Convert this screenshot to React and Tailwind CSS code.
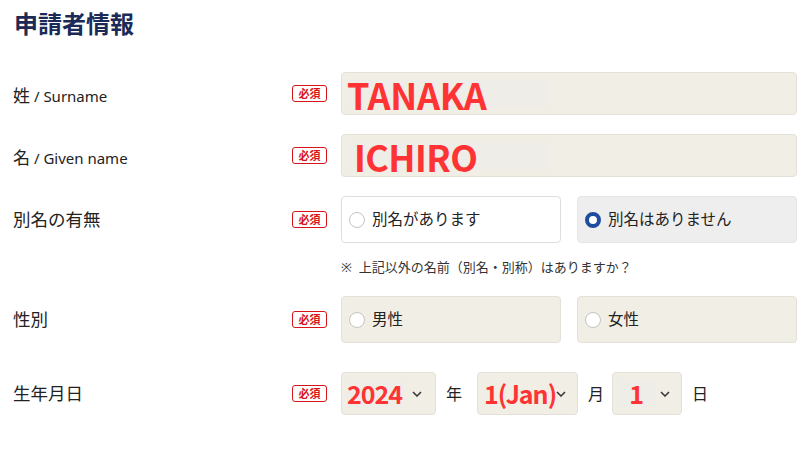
import React from "react";

const Badge = () => (
    <div className="w-[35px] h-[17px] shrink-0 border border-[#d8141b] rounded-[3px] flex items-center justify-center text-[11px] font-bold text-[#d8141b] leading-none">
        必須
    </div>
);

const Chevron = () => (
    <svg width="10" height="6" viewBox="0 0 10 6" className="shrink-0">
        <path d="M1 1 L5 5 L9 1" fill="none" stroke="#333" strokeWidth="1.5"/>
    </svg>
);

const Radio = ({checked}) => (
    checked ? (
        <span className="w-[16px] h-[16px] rounded-full border-[4px] border-[#1d4e9e] bg-white shrink-0"></span>
    ) : (
        <span className="w-[16px] h-[16px] rounded-full border border-[#c4c4c4] bg-white shrink-0"></span>
    )
);

const Row = ({label, children, className}) => (
    <div className={"flex items-center " + (className || "")}>
        <div className="w-[292px] pl-[13px] shrink-0">{label}</div>
        <Badge/>
        <div className="ml-[14px] w-[456px]">{children}</div>
    </div>
);

const App = () => {
    return (
        <div className="w-[809px] h-[451px] bg-white text-[#222] font-['Noto_Sans','Noto_Sans_CJK_JP',sans-serif] overflow-hidden">
            <h2 className="pl-[14px] pt-[7px] text-[24px] leading-[32px] font-bold text-[#1b2a56] font-['Noto_Sans_CJK_JP',sans-serif]">
                申請者情報
            </h2>

            {/* 姓 */}
            <Row className="mt-[33px]" label={
                <span className="block pt-[4px] text-[17px]">姓<span className="text-[15px]"> / Surname</span></span>
            }>
                <div className="h-[43px] bg-[#f1eee5] border border-[#e4e1d9] rounded-[4px] flex items-center px-[5px]">
                    <div className="w-[203px] h-[28px] bg-[#efede7] flex items-center">
                        <span className="text-[36px] font-bold text-[#ff3333] font-['Noto_Sans_CJK_JP',sans-serif] leading-none tracking-[-0.3px]">TANAKA</span>
                    </div>
                </div>
            </Row>

            {/* 名 */}
            <Row className="mt-[19px]" label={
                <span className="block pt-[4px] text-[17px]">名<span className="text-[15px]"> / Given name</span></span>
            }>
                <div className="h-[43px] bg-[#f1eee5] border border-[#e4e1d9] rounded-[4px] flex items-center px-[5px]">
                    <div className="w-[203px] h-[28px] bg-[#efede7] flex items-center pl-[7px]">
                        <span className="text-[36px] font-bold text-[#ff3333] font-['Noto_Sans_CJK_JP',sans-serif] leading-none tracking-[-0.6px]">ICHIRO</span>
                    </div>
                </div>
            </Row>

            {/* 別名の有無 */}
            <Row className="mt-[19px]" label={<span className="text-[17.5px]">別名の有無</span>}>
                <div className="flex gap-[16px]">
                    <div className="w-[220px] h-[47px] bg-white border border-[#dedede] rounded-[4px] flex items-center pl-[7px] gap-[7px]">
                        <Radio/>
                        <span className="text-[15.5px]">別名があります</span>
                    </div>
                    <div className="w-[220px] h-[47px] bg-[#eeeeee] border border-[#e6e6e6] rounded-[4px] flex items-center pl-[7px] gap-[7px]">
                        <Radio checked/>
                        <span className="text-[15.5px]">別名はありません</span>
                    </div>
                </div>
            </Row>
            <div className="pl-[341px] mt-[15px] text-[13px] leading-[18px] text-[#333]">
                ※&nbsp;&nbsp;上記以外の名前（別名・別称）はありますか？
            </div>

            {/* 性別 */}
            <Row className="mt-[20px]" label={<span className="text-[17.5px]">性別</span>}>
                <div className="flex gap-[16px]">
                    <div className="w-[220px] h-[47px] bg-[#f1eee5] border border-[#e4e1d9] rounded-[4px] flex items-center pl-[7px] gap-[7px]">
                        <Radio/>
                        <span className="text-[15.5px]">男性</span>
                    </div>
                    <div className="w-[220px] h-[47px] bg-[#f1eee5] border border-[#e4e1d9] rounded-[4px] flex items-center pl-[7px] gap-[7px]">
                        <Radio/>
                        <span className="text-[15.5px]">女性</span>
                    </div>
                </div>
            </Row>

            {/* 生年月日 */}
            <Row className="mt-[29px]" label={<span className="text-[17.5px]">生年月日</span>}>
                <div className="flex items-center text-[16px]">
                    <div className="w-[95px] h-[43px] bg-[#f1eee5] border border-[#e4e1d9] rounded-[4px] flex items-center justify-between pl-[5px] pr-[13px]">
                        <div className="w-[56px] h-[28px] bg-[#efede7] flex items-center">
                            <span className="text-[25px] font-bold text-[#ff3333] font-['Noto_Sans_CJK_JP',sans-serif] leading-none tracking-[-1px]">2024</span>
                        </div>
                        <Chevron/>
                    </div>
                    <span className="ml-[10px] mr-[15px]">年</span>
                    <div className="w-[101px] h-[43px] bg-[#f1eee5] border border-[#e4e1d9] rounded-[4px] flex items-center justify-between pl-[6px] pr-[14px]">
                        <span className="text-[25px] font-bold text-[#ff3333] font-['Noto_Sans_CJK_JP',sans-serif] leading-none tracking-[-1px]">1(Jan)</span>
                        <Chevron/>
                    </div>
                    <span className="ml-[10px] mr-[8px]">月</span>
                    <div className="w-[70px] h-[43px] bg-[#f1eee5] border border-[#e4e1d9] rounded-[4px] flex items-center justify-between pl-[5px] pr-[11px]">
                        <div className="w-[37px] h-[27px] bg-[#efede7] flex items-center justify-center">
                            <span className="text-[25px] font-bold text-[#ff3333] font-['Noto_Sans_CJK_JP',sans-serif] leading-none">1</span>
                        </div>
                        <Chevron/>
                    </div>
                    <span className="ml-[10px]">日</span>
                </div>
            </Row>
        </div>
    );
};

export default App;
